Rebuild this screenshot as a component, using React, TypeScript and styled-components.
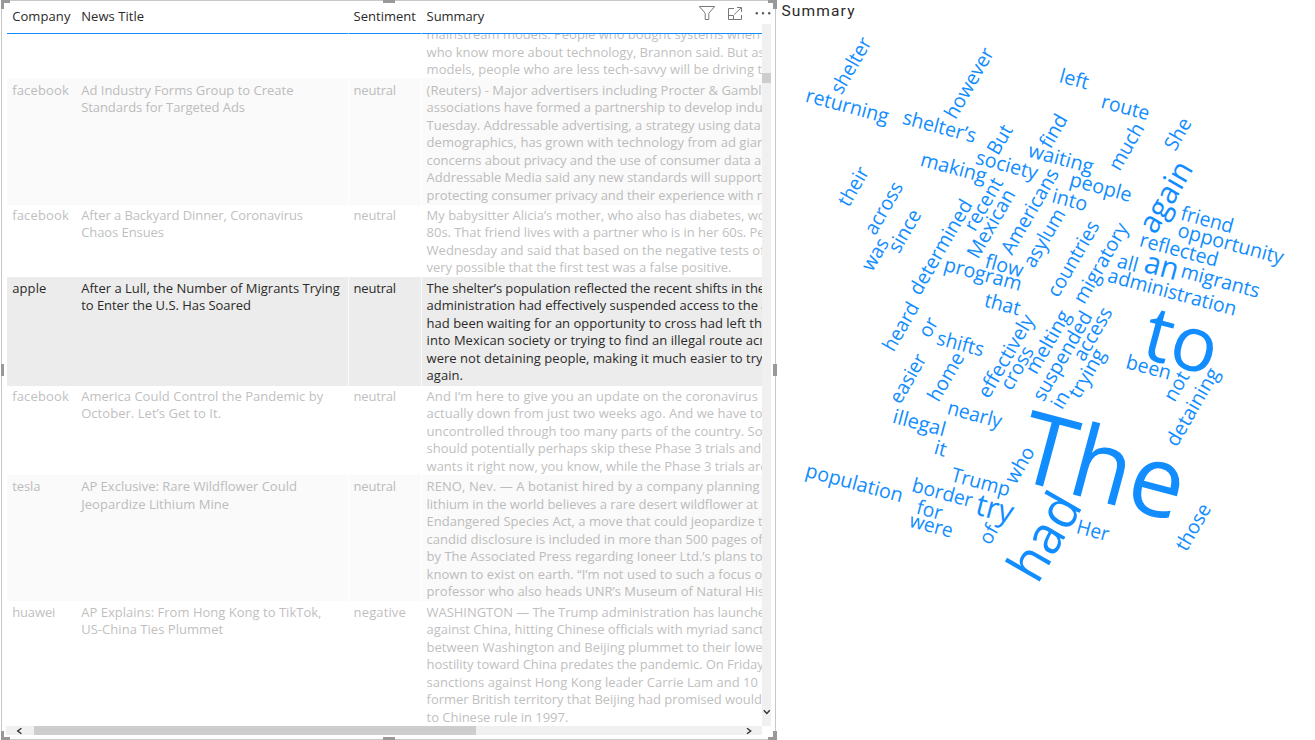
import React from "react";
import styled, { createGlobalStyle } from "styled-components";

const FONT = '"Open Sans", "Noto Sans", sans-serif';
const BLUE = "#118dff";

const GlobalStyle = createGlobalStyle`
  * { box-sizing: border-box; }
  body { margin: 0; background: #fff; overflow: hidden; font-family: ${FONT}; }
`;

/* ---------- text fitting ---------- */

const TABLE_SIZE = 13;
const ctx = document.createElement("canvas").getContext("2d")!;

/** Letter spacing that makes `text` span `width` pixels. */
function spacingFor(text: string, width: number) {
  ctx.font = `${TABLE_SIZE}px ${FONT}`;
  return (width + 1 - ctx.measureText(text).width) / text.length;
}

type Fit = [text: string, width: number];

const TextLine = styled.div`
  height: 17.5px;
  line-height: 17.5px;
  white-space: pre;
`;

function Lines({ lines }: { lines: Fit[] }) {
  return (
    <>
      {lines.map(([text, width]) => (
        <TextLine key={text} style={{ letterSpacing: `${spacingFor(text, width).toFixed(3)}px` }}>
          {text}
        </TextLine>
      ))}
    </>
  );
}

/* ---------- table data ---------- */

interface NewsRow {
  height: number;
  pad: number;
  tone: "plain" | "banded" | "selected";
  clipped?: boolean;
  company: Fit[];
  title: Fit[];
  sentiment: Fit[];
  summary: Fit[];
}

const neutral: Fit[] = [["neutral", 41.3]];
const facebook: Fit[] = [["facebook", 55.7]];

const rows: NewsRow[] = [
  {
    height: 44, pad: 0, tone: "plain", clipped: true, company: [], title: [], sentiment: [],
    summary: [
      ["mainstream models. People who bought systems when", 332.3],
      ["who know more about technology, Brannon said. But as", 337],
      ["models, people who are less tech-savvy will be driving t", 334.5],
    ],
  },
  {
    height: 127, pad: 3.7, tone: "banded", company: facebook, sentiment: neutral,
    title: [["Ad Industry Forms Group to Create", 211.3], ["Standards for Targeted Ads", 162.7]],
    summary: [
      ["(Reuters) - Major advertisers including Procter & Gambl", 334],
      ["associations have formed a partnership to develop indu", 335],
      ["Tuesday. Addressable advertising, a strategy using data", 333],
      ["demographics, has grown with technology from ad gian", 337.5],
      ["concerns about privacy and the use of consumer data a", 333.7],
      ["Addressable Media said any new standards will support", 334],
      ["protecting consumer privacy and their experience with m", 341],
    ],
  },
  {
    height: 72, pad: 1.7, tone: "plain", company: facebook, sentiment: neutral,
    title: [["After a Backyard Dinner, Coronavirus", 220.7], ["Chaos Ensues", 81.7]],
    summary: [
      ["My babysitter Alicia’s mother, who also has diabetes, wo", 338],
      ["80s. That friend lives with a partner who is in her 60s. Pe", 337],
      ["Wednesday and said that based on the negative tests of", 337],
      ["very possible that the first test was a false positive.", 303.7],
    ],
  },
  {
    height: 109, pad: 2.7, tone: "selected", company: [["apple", 33.3]], sentiment: neutral,
    title: [["After a Lull, the Number of Migrants Trying", 257.7], ["to Enter the U.S. Has Soared", 168.7]],
    summary: [
      ["The shelter’s population reflected the recent shifts in the", 337.5],
      ["administration had effectively suspended access to the a", 341],
      ["had been waiting for an opportunity to cross had left th", 334.3],
      ["into Mexican society or trying to find an illegal route acr", 337],
      ["were not detaining people, making it much easier to try", 335],
      ["again.", 35.3],
    ],
  },
  {
    height: 89, pad: 1.7, tone: "plain", company: facebook, sentiment: neutral,
    title: [["America Could Control the Pandemic by", 241], ["October. Let’s Get to It.", 139]],
    summary: [
      ["And I’m here to give you an update on the coronavirus", 330.3],
      ["actually down from just two weeks ago. And we have to", 335],
      ["uncontrolled through too many parts of the country. So", 335],
      ["should potentially perhaps skip these Phase 3 trials and", 333.7],
      ["wants it right now, you know, while the Phase 3 trials are", 340],
    ],
  },
  {
    height: 126, pad: 3, tone: "banded", company: [["tesla", 27.3]], sentiment: neutral,
    title: [["AP Exclusive: Rare Wildflower Could", 214.7], ["Jeopardize Lithium Mine", 147]],
    summary: [
      ["RENO, Nev. — A botanist hired by a company planning", 332],
      ["lithium in the world believes a rare desert wildflower at", 330.3],
      ["Endangered Species Act, a move that could jeopardize t", 335],
      ["candid disclosure is included in more than 500 pages of", 335],
      ["by The Associated Press regarding Ioneer Ltd.’s plans to", 335],
      ["known to exist on earth. “I’m not used to such a focus o", 334.7],
      ["professor who also heads UNR’s Museum of Natural His", 336.5],
    ],
  },
  {
    height: 125, pad: 2.7, tone: "plain", company: [["huawei", 42]], sentiment: [["negative", 51.3]],
    title: [["AP Explains: From Hong Kong to TikTok,", 239.3], ["US-China Ties Plummet", 141]],
    summary: [
      ["WASHINGTON — The Trump administration has launche", 337.5],
      ["against China, hitting Chinese officials with myriad sanct", 336],
      ["between Washington and Beijing plummet to their lowe", 335],
      ["hostility toward China predates the pandemic. On Friday", 336],
      ["sanctions against Hong Kong leader Carrie Lam and 10", 330.3],
      ["former British territory that Beijing had promised would", 334.3],
      ["to Chinese rule in 1997.", 140.7],
    ],
  },
];

/* ---------- table visual ---------- */

const Page = styled.main`
  display: flex;
  width: 1315px;
  height: 740px;
  overflow: hidden;
`;

const TableVisual = styled.section`
  position: relative;
  flex: none;
  width: 775px;
  height: 740px;
  margin-left: 1px;
  padding: 0 3px 0 5px;
  border: 1px solid #c8c8c8;
  display: flex;
  flex-direction: column;
`;

const Upper = styled.div`
  display: flex;
  height: 725px;
`;

const Table = styled.div`
  width: 755px;
  overflow: hidden;
`;

const columns = "69px 273px 73px 1fr";

const HeaderRow = styled.div`
  display: grid;
  grid-template-columns: ${columns};
  height: 33px;
`;

const HeaderCell = styled.div<{ $divider?: boolean; $inset?: number }>`
  padding: 6.6px 0 0 ${(p) => p.$inset ?? 5.2}px;
  font-size: ${TABLE_SIZE}px;
  color: #2b2a29;
  border-bottom: 1px solid ${BLUE};
  border-right: ${(p) => (p.$divider ? "1px solid #fff" : "0")};
`;

const tones = {
  plain: { background: "#fff", color: "#bfbfbf", line: "#fff" },
  banded: { background: "#fafafa", color: "#bcbcbc", line: "#fff" },
  selected: { background: "#ececec", color: "#2b2a29", line: "#fafafa" },
};

const Row = styled.div<{ $tone: NewsRow["tone"]; $height: number; $clipped?: boolean }>`
  display: grid;
  grid-template-columns: ${columns};
  align-items: ${(p) => (p.$clipped ? "end" : "stretch")};
  height: ${(p) => p.$height}px;
  overflow: hidden;
  font-size: ${TABLE_SIZE}px;
  background: ${(p) => tones[p.$tone].background};
  color: ${(p) => tones[p.$tone].color};
`;

const Cell = styled.div<{ $pad: number; $line?: string; $clipped?: boolean; $inset?: number }>`
  padding: ${(p) => p.$pad}px 0 0 ${(p) => p.$inset ?? 5.2}px;
  margin-bottom: ${(p) => (p.$clipped ? "-0.7px" : "0")};
  overflow: hidden;
  border-right: ${(p) => (p.$line ? `1px solid ${p.$line}` : "0")};
`;

const VTrack = styled.div`
  width: 9px;
  height: 702px;
  margin-top: 23px;
  background: #f0f0f0;
  display: flex;
  flex-direction: column;
  justify-content: space-between;
  align-items: center;
  padding: 49px 0 10px;
`;

const VThumb = styled.div`
  width: 9px;
  height: 10px;
  background: #cdcdcd;
`;

const HTrack = styled.div`
  width: 756px;
  height: 9px;
  margin-left: -1px;
  background: #f0f0f0;
  display: flex;
  align-items: center;
  padding: 0 9.5px;
`;

const HThumb = styled.div`
  width: 442px;
  height: 9px;
  margin: 0 auto 0 10.5px;
  background: #cdcdcd;
`;

const Toolbar = styled.div`
  position: absolute;
  top: 4px;
  right: 3px;
  display: flex;
  align-items: flex-start;
  svg { display: block; }
`;

const Handle = styled.i<{ $v: "top" | "middle" | "bottom"; $h: "left" | "center" | "right" }>`
  position: absolute;
  border: 0 solid #999;
  ${(p) => (p.$v === "middle" ? "top: 363px; height: 12px;" : `${p.$v}: -1px;`)}
  ${(p) => (p.$h === "center" ? "left: 381px; width: 12px;" : `${p.$h}: ${p.$h === "right" ? -2 : -1}px;`)}
  ${(p) => (p.$v !== "middle" ? `border-${p.$v}-width: 3px;` : "")}
  ${(p) => (p.$h !== "center" ? `border-${p.$h}-width: ${p.$h === "right" ? 4 : 3}px;` : "")}
  ${(p) => (p.$v !== "middle" && p.$h !== "center" ? "width: 9px; height: 9px;" : "")}
`;

function Chevron({ d }: { d: string }) {
  return (
    <svg width="8" height="8" viewBox="0 0 8 8" fill="none" stroke="#333" strokeWidth="1.4">
      <path d={d} />
    </svg>
  );
}

function NewsTable() {
  return (
    <TableVisual>
      <Upper>
        <Table>
          <HeaderRow>
            <HeaderCell><Lines lines={[["Company", 57.3]]} /></HeaderCell>
            <HeaderCell $divider><Lines lines={[["News Title", 62]]} /></HeaderCell>
            <HeaderCell $divider $inset={4.6}><Lines lines={[["Sentiment", 61.3]]} /></HeaderCell>
            <HeaderCell $inset={4.6}><Lines lines={[["Summary", 56.7]]} /></HeaderCell>
          </HeaderRow>
          {rows.map((row, i) => {
            const { line } = tones[row.tone];
            return (
              <Row key={i} $tone={row.tone} $height={row.height} $clipped={row.clipped}>
                <Cell $pad={row.pad}><Lines lines={row.company} /></Cell>
                <Cell $pad={row.pad} $line={line}><Lines lines={row.title} /></Cell>
                <Cell $pad={row.pad} $line={line} $inset={4.6}><Lines lines={row.sentiment} /></Cell>
                <Cell $pad={row.pad} $clipped={row.clipped} $inset={4.6}><Lines lines={row.summary} /></Cell>
              </Row>
            );
          })}
        </Table>
        <VTrack>
          <VThumb />
          <Chevron d="M.8 2.3 3.8 5.5 6.8 2.3" />
        </VTrack>
      </Upper>
      <HTrack>
        <Chevron d="M5.4 1.2 1.7 4 5.4 6.8" />
        <HThumb />
        <Chevron d="M2 1.2 5.7 4 2 6.8" />
      </HTrack>
      <Toolbar>
        <svg width="74" height="18" viewBox="698 5 74 18" fill="none" stroke="#777" strokeWidth="1">
          <path d="M699.3 6.5H714.7L708.8 13.2V19.5H705.2V13.2Z" />
          <path d="M734 8.5H728.5V19.5H741.5V15" />
          <path d="M728.5 15.5H733.5V19.5M734.2 14.6 741 7.8M737 7.5H741.5V12" />
          <g fill="#555" stroke="none">
            <circle cx="756.8" cy="13.2" r="1.2" />
            <circle cx="763" cy="13.2" r="1.2" />
            <circle cx="769.2" cy="13.2" r="1.2" />
          </g>
        </svg>
      </Toolbar>
      <Handle $v="top" $h="left" />
      <Handle $v="top" $h="center" />
      <Handle $v="top" $h="right" />
      <Handle $v="middle" $h="left" />
      <Handle $v="middle" $h="right" />
      <Handle $v="bottom" $h="left" />
      <Handle $v="bottom" $h="center" />
      <Handle $v="bottom" $h="right" />
    </TableVisual>
  );
}

/* ---------- word cloud ---------- */

/** Advance width of each glyph, in em. */
const advance: Record<string, number> = {
  a: 0.509, b: 0.588, c: 0.462, d: 0.589, e: 0.523, f: 0.313, g: 0.589, h: 0.566, i: 0.242,
  j: 0.242, k: 0.497, l: 0.242, m: 0.861, n: 0.566, o: 0.586, p: 0.588, r: 0.348, s: 0.424,
  t: 0.339, u: 0.566, v: 0.479, w: 0.723, x: 0.459, y: 0.484, A: 0.645, B: 0.573, H: 0.71,
  M: 0.898, S: 0.531, T: 0.524, "’": 0.23,
};

const SMALL = 20.8;

/** Word, baseline start x and y, and size. */
type Word = [string, number, number, number?];

const falling: Word[] = [
  ["returning", 804.6, 101.5], ["shelter’s", 901.4, 123.5], ["making", 919.2, 165.5],
  ["society", 974.4, 163.4], ["left", 1058.3, 82], ["route", 1100.1, 107.6],
  ["waiting", 1027, 156.4], ["people", 1068.5, 185.6], ["into", 1050.7, 202],
  ["friend", 1179.6, 219.4], ["opportunity", 1176.4, 236.2], ["reflected", 1138.6, 246.1],
  ["all", 1116, 267], ["an", 1142.5, 271.4, 32], ["migrants", 1179.8, 277.1],
  ["administration", 1106.6, 281.6], ["flow", 983.8, 267.3], ["program", 942.8, 270.4],
  ["that", 983.2, 306.2], ["shifts", 935.6, 344.2], ["nearly", 946.2, 413.8],
  ["illegal", 891.6, 422.6], ["been", 1124.8, 368], ["to", 1139.2, 356.9, 80],
  ["The", 1013.2, 478.5, 104], ["Her", 1075.3, 532.8], ["it", 932.9, 453.6],
  ["population", 804.3, 476.5], ["Trump", 950.1, 481], ["border", 910.8, 491.3],
  ["for", 915.3, 513.3], ["were", 908.3, 526.4], ["try", 974.1, 513.9, 32],
];

const rising: Word[] = [
  ["shelter", 841.4, 95.6], ["however", 955.6, 120.2], ["But", 998, 156.3],
  ["much", 1119.4, 172.1], ["She", 1175.3, 152], ["find", 1050.5, 149.8],
  ["Americans", 1011.9, 256], ["asylum", 1034, 269], ["again", 1155.3, 235.5, 32],
  ["countries", 1058, 298.6], ["migratory", 1084.2, 305.2], ["their", 848.8, 208],
  ["across", 875.2, 236.2], ["was", 872.3, 272.6], ["since", 899, 254.2],
  ["determined", 920, 296.4], ["heard", 893.6, 352.8], ["recent", 974.9, 232.4],
  ["Mexican", 978, 260], ["or", 929.3, 339], ["effectively", 988.7, 399.6],
  ["cross", 1011.2, 391.5], ["easier", 900.3, 405], ["home", 938.6, 403],
  ["melting", 1036.3, 375.6], ["suspended", 1043.4, 402.6], ["access", 1084, 362.6],
  ["trying", 1079.3, 399.8], ["in", 1062.1, 410.4], ["not", 1174.5, 403],
  ["detaining", 1176.8, 447.7], ["had", 1037.6, 585.2, 55], ["who", 1015.8, 485.2],
  ["those", 1186.4, 552.4], ["of", 989.7, 546],
];

const CloudVisual = styled.section`
  flex: 1;
  display: flex;
  flex-direction: column;
`;

const CloudTitle = styled.h2`
  margin: 0;
  height: 22px;
  padding-left: 5.5px;
  font: 400 15.5px/22px Roboto, sans-serif;
  letter-spacing: 1.15px;
  color: #2b2a29;
`;

const Cloud = styled.svg`
  display: block;
  font-family: ${FONT};
  fill: ${BLUE};
`;

function CloudWord({ word: [text, x, y, size = SMALL], angle }: { word: Word; angle: number }) {
  const length = [...text].reduce((sum, ch) => sum + advance[ch], 0) * size;
  return (
    <text
      transform={`translate(${x} ${y}) rotate(${angle})`}
      fontSize={size * 0.96}
      textLength={length}
      lengthAdjust="spacingAndGlyphs"
    >
      {text}
    </text>
  );
}

function WordCloud() {
  return (
    <CloudVisual>
      <CloudTitle>Summary</CloudTitle>
      <Cloud width="539" height="718" viewBox="776 22 539 718">
        {falling.map((w) => <CloudWord key={w[0]} word={w} angle={15} />)}
        {rising.map((w) => <CloudWord key={w[0]} word={w} angle={-60} />)}
      </Cloud>
    </CloudVisual>
  );
}

export default function App() {
  return (
    <Page>
      <GlobalStyle />
      <NewsTable />
      <WordCloud />
    </Page>
  );
}
